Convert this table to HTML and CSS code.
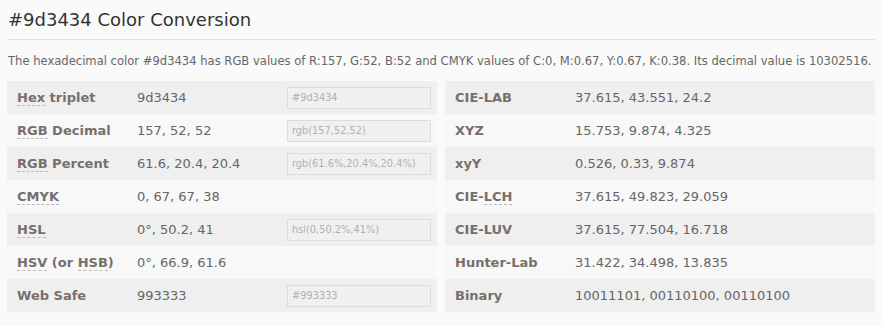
FILE: index.html
```html
<!DOCTYPE html>
<html>
<head>
<meta charset="utf-8">
<link rel="stylesheet" href="styles.css">
</head>
<body>
<div class="page">
  <h1 class="title">#9d3434 Color Conversion</h1>
  <p class="desc">The hexadecimal color #9d3434 has RGB values of R:157, G:52, B:52 and CMYK values of C:0, M:0.67, Y:0.67, K:0.38. Its decimal value is 10302516.</p>
  <div class="tables">
    <div class="table">
      <div class="row"><div class="label"><abbr>Hex</abbr> triplet</div><div class="value">9d3434</div><div class="field"><span class="input">#9d3434</span></div></div>
      <div class="row"><div class="label"><abbr>RGB</abbr> Decimal</div><div class="value">157, 52, 52</div><div class="field"><span class="input">rgb(157,52,52)</span></div></div>
      <div class="row"><div class="label"><abbr>RGB</abbr> Percent</div><div class="value">61.6, 20.4, 20.4</div><div class="field"><span class="input">rgb(61.6%,20.4%,20.4%)</span></div></div>
      <div class="row"><div class="label"><abbr>CMYK</abbr></div><div class="value">0, 67, 67, 38</div><div class="field"></div></div>
      <div class="row"><div class="label"><abbr>HSL</abbr></div><div class="value">0°, 50.2, 41</div><div class="field"><span class="input">hsl(0,50.2%,41%)</span></div></div>
      <div class="row"><div class="label"><abbr>HSV</abbr> (or <abbr>HSB</abbr>)</div><div class="value">0°, 66.9, 61.6</div><div class="field"></div></div>
      <div class="row"><div class="label">Web Safe</div><div class="value">993333</div><div class="field"><span class="input">#993333</span></div></div>
    </div>
    <div class="table">
      <div class="row"><div class="label">CIE-LAB</div><div class="value">37.615, 43.551, 24.2</div></div>
      <div class="row"><div class="label">XYZ</div><div class="value">15.753, 9.874, 4.325</div></div>
      <div class="row"><div class="label">xyY</div><div class="value">0.526, 0.33, 9.874</div></div>
      <div class="row"><div class="label">CIE-<abbr>LCH</abbr></div><div class="value">37.615, 49.823, 29.059</div></div>
      <div class="row"><div class="label">CIE-LUV</div><div class="value">37.615, 77.504, 16.718</div></div>
      <div class="row"><div class="label">Hunter-Lab</div><div class="value">31.422, 34.498, 13.835</div></div>
      <div class="row"><div class="label">Binary</div><div class="value">10011101, 00110100, 00110100</div></div>
    </div>
  </div>
</div>
</body>
</html>
```
FILE: styles.css
```css
html, body {
  margin: 0;
  padding: 0;
  background: #fafafa;
}
body {
  font-family: "DejaVu Sans", Verdana, sans-serif;
  color: #666;
}
.page {
  padding: 8px 8px 0 7px;
}
.title {
  margin: 0 0 0 1px;
  padding: 0 0 7px;
  font-size: 18px;
  font-weight: normal;
  color: #333;
  line-height: 24px;
  border-bottom: 1px solid #e0e0e0;
}
.desc {
  margin: 0;
  padding: 13px 0 11px 1px;
  font-size: 11.57px;
  line-height: 17px;
  color: #666;
  white-space: nowrap;
}
.tables {
  display: grid;
  grid-template-columns: 430px 430px;
  column-gap: 8px;
}
.row {
  display: grid;
  grid-template-columns: 130px 150px 150px;
  align-items: center;
  height: 33px;
  background: #f8f8f8;
}
.row:nth-child(odd) {
  background: #efefef;
}
.label {
  padding-left: 10px;
  font-weight: bold;
  font-size: 13px;
  color: #776f6b;
  white-space: nowrap;
}
.value {
  font-size: 13px;
  color: #666;
  white-space: nowrap;
}
.table:last-child .row {
  grid-template-columns: 130px 300px;
}
abbr {
  text-decoration: none;
  border-bottom: 1px dashed #bbb;
}
.field {
  padding-right: 6px;
}
.input {
  display: block;
  height: 20px;
  line-height: 20px;
  border: 1px solid #dcdcdc;
  background: #f0f0f0;
  font-size: 9.8px;
  color: #b0b0b0;
  padding-left: 4px;
}
```
